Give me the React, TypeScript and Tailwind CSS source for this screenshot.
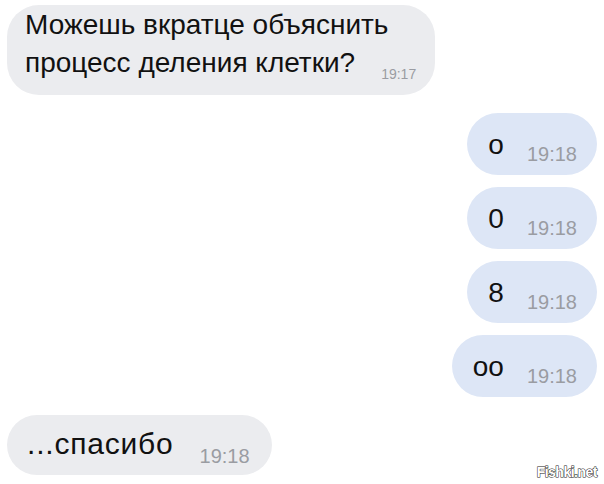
import React from "react";

const font = { fontFamily: '"Liberation Sans", Arial, sans-serif' };

function Right({ text }: { text: string }) {
  return (
    <div className="self-end mt-[12px] h-[62px] rounded-full bg-[#dde6f6] flex items-baseline pl-[21px] pr-[20px] pt-[18px] gap-[23px]">
      <span className="text-[28px] leading-[28px] text-[#111]">{text}</span>
      <span className="text-[20px] leading-[20px] text-[#9a9ca2] translate-y-[7px]">19:18</span>
    </div>
  );
}

export default function App() {
  return (
    <div
      className="relative w-[604px] h-[484px] bg-white overflow-hidden flex flex-col pt-[5px] px-[7px]"
      style={font}
    >
      <div className="self-start w-[428px] h-[90px] rounded-[32px] bg-[#ebecef] pl-[18px] pt-[1px] text-[28px] leading-[38px] text-[#111]">
        <div>Можешь вкратце объяснить</div>
        <div>
          процесс деления клетки?
          <span className="ml-[26px] text-[14px] text-[#9a9ca2] align-[-7px]">19:17</span>
        </div>
      </div>
      <div className="h-[6px]" />
      <Right text="о" />
      <Right text="0" />
      <Right text="8" />
      <Right text="оо" />
      <div className="self-start mt-[18px] h-[60px] rounded-full bg-[#ebecef] flex items-baseline pl-[20px] pr-[22px] pt-[14px] gap-[26px]">
        <span className="text-[30px] leading-[30px] tracking-[0.8px] text-[#111]">...спасибо</span>
        <span className="text-[20px] leading-[20px] text-[#9a9ca2] translate-y-[9px]">19:18</span>
      </div>
      <div className="absolute right-[7px] bottom-[5px] text-[14px] leading-[14px] font-bold text-white tracking-[-0.5px] [-webkit-text-stroke:1px_#222] [paint-order:stroke_fill]">
        Fishki.net
      </div>
    </div>
  );
}
